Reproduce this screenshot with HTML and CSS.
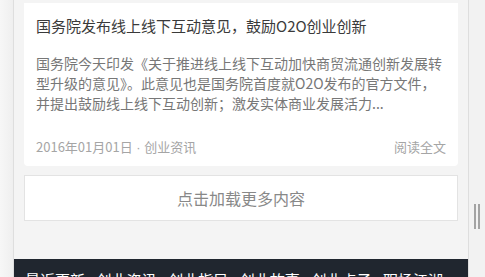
FILE: index.html
```html
<!DOCTYPE html>
<html lang="zh-CN">
<head>
<meta charset="utf-8">
<title>创业资讯</title>
<link rel="stylesheet" href="styles.css">
</head>
<body>
<div class="shell">
  <div class="gutter"></div>
  <div class="page">
    <div class="content">
      <article class="card">
        <h2 class="card-title">国务院发布线上线下互动意见，鼓励O2O创业创新</h2>
        <p class="card-desc">国务院今天印发《关于推进线上线下互动加快商贸流通创新发展转型升级的意见》。此意见也是国务院首度就O2O发布的官方文件，并提出鼓励线上线下互动创新；激发实体商业发展活力...</p>
        <div class="card-meta">
          <span class="meta-info">2016年01月01日<span class="meta-dot"> · </span>创业资讯</span>
          <span class="meta-link">阅读全文</span>
        </div>
      </article>
      <div class="load-more">点击加载更多内容</div>
    </div>
    <footer class="footer">
      <span class="footer-item">最近更新</span>
      <span class="footer-item">创业资讯</span>
      <span class="footer-item">创业指导</span>
      <span class="footer-item">创业故事</span>
      <span class="footer-item">创业点子</span>
      <span class="footer-item">职场江湖</span>
    </footer>
  </div>
  <div class="side">
    <div class="grip"></div>
  </div>
</div>
</body>
</html>
```
FILE: styles.css
```css
html, body {
  margin: 0;
  padding: 0;
  height: 100%;
  overflow: hidden;
}
body {
  font-family: "Noto Sans CJK SC", "Noto Sans", "Liberation Sans", sans-serif;
  background: #f2f2f2;
}
.shell {
  display: flex;
  height: 277px;
}
.gutter {
  width: 13px;
  flex: none;
  background: linear-gradient(to right, #f7f7f7, #efefef);
}
.page {
  width: 454px;
  flex: none;
  border-left: 1px solid #dedede;
  border-right: 1px solid #dedede;
  background: #f4f4f4;
  display: flex;
  flex-direction: column;
  overflow: hidden;
}
.content {
  flex: none;
  padding: 3px 10px 0;
  height: 259px;
  box-sizing: border-box;
}
.card {
  background: #fff;
  border-radius: 0 0 4px 4px;
  padding: 12px 12px 8px;
}
.card-title {
  margin: 0;
  font-size: 15px;
  font-weight: normal;
  line-height: 22px;
  color: #3a3a3a;
}
.card-desc {
  margin: 16px 0 0;
  font-size: 14px;
  line-height: 20px;
  color: #777;
}
.card-meta {
  margin-top: 24px;
  display: flex;
  justify-content: space-between;
  font-size: 13px;
  line-height: 20px;
  color: #a5a5a5;
}
.meta-dot {
  font-family: "Liberation Sans", sans-serif;
}
.load-more {
  margin-top: 9px;
  height: 44px;
  border: 1px solid #e3e3e3;
  background: #fff;
  display: flex;
  align-items: center;
  justify-content: center;
  font-size: 16px;
  color: #888;
}
.footer {
  flex: none;
  margin: 0 -1px;
  background: #20262f;
  padding: 10px 12px 10px;
  display: flex;
  gap: 11.6px;
}
.footer-item {
  font-size: 15px;
  line-height: 22px;
  color: #fff;
  white-space: nowrap;
}
.side {
  flex: 1;
  background: #f2f2f2;
  display: flex;
  justify-content: center;
  padding-top: 204px;
}
.grip {
  width: 2px;
  height: 25px;
  border-left: 2px solid #a3a3a3;
  border-right: 2px solid #a3a3a3;
}
```
